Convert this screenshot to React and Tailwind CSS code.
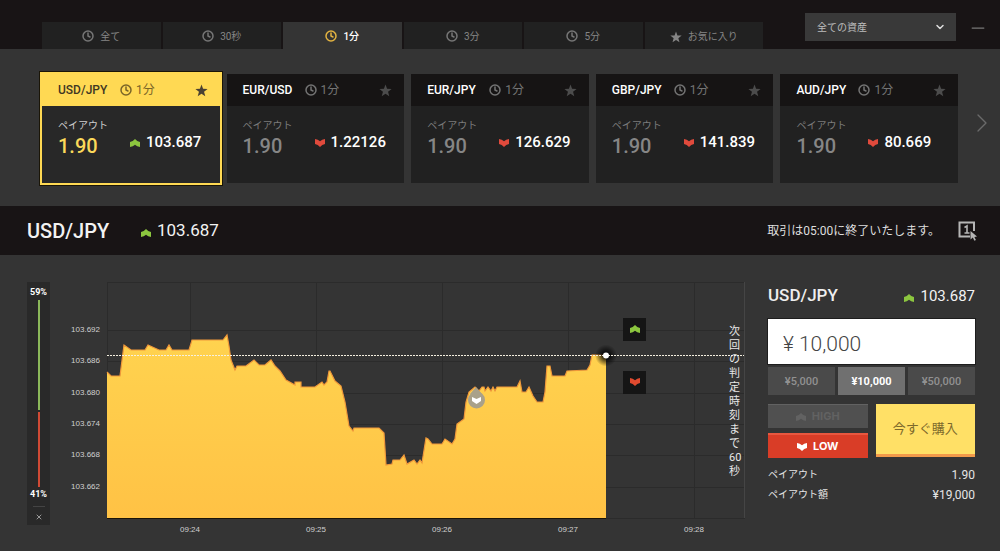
import React, { useState } from 'react';
import { Clock, ChevronDown, ChevronRight, Minus, X } from 'lucide-react';

const TABS = [
    { id: 'all', label: '全て', icon: 'clock' },
    { id: '30s', label: '30秒', icon: 'clock' },
    { id: '1m', label: '1分', icon: 'clock' },
    { id: '3m', label: '3分', icon: 'clock' },
    { id: '5m', label: '5分', icon: 'clock' },
    { id: 'fav', label: 'お気に入り', icon: 'star' },
];

const ASSETS = [
    { pair: 'USD/JPY', price: '103.687', up: true },
    { pair: 'EUR/USD', price: '1.22126', up: false },
    { pair: 'EUR/JPY', price: '126.629', up: false },
    { pair: 'GBP/JPY', price: '141.839', up: false },
    { pair: 'AUD/JPY', price: '80.669', up: false },
];

const AMOUNTS = ['5,000', '10,000', '50,000'];

// Chart geometry, in viewBox units
const PRICE_LINES = [
    { y: 48, label: '103.692' },
    { y: 79, label: '103.686' },
    { y: 111, label: '103.680' },
    { y: 142, label: '103.674' },
    { y: 173, label: '103.668' },
    { y: 205, label: '103.662' },
];

const TIME_LINES = [
    { x: 122, label: '09:24' },
    { x: 248, label: '09:25' },
    { x: 374, label: '09:26' },
    { x: 500, label: '09:27' },
    { x: 626, label: '09:28' },
];

const SERIES =
    '39,90 43,94 52,94 56,63 63,68 77,68 80,63 91,68 98,68 101,63 104,68 121,68 124,58 155,58 159,53 161,64 163,78 167,88 169,84 178,84 186,78 191,83 197,83 203,78 207,84 212,89 218,98 227,103 227,100 233,100 233,105 247,105 254,100 256,103 259,100 261,89 262,89 267,99 273,104 277,120 281,144 285,149 286,146 311,146 316,151 318,183 324,182 325,178 332,178 336,173 339,182 346,178 349,182 352,178 354,181 358,156 360,157 364,162 374,162 377,157 384,162 387,157 389,142 396,137 398,120 401,110 407,105 411,109 414,105 416,105 417,109 420,105 423,109 425,105 427,109 429,105 449,105 452,99 454,110 458,110 461,105 465,114 469,120 475,120 477,110 479,84 482,84 484,94 497,94 499,89 519,88 522,83 524,73 538,73';

const Star = ({ className }) => (
    <svg viewBox="0 0 24 24" fill="currentColor" className={className} aria-hidden="true">
        <path d="M12 1l2.9 7.9 8.4.3-6.6 5.2 2.3 8.1-7-4.7-7 4.7 2.3-8.1L.7 9.2l8.4-.3z" />
    </svg>
);

const Arrow = ({ up, className }) => (
    <svg viewBox="0 0 10 8" fill="currentColor" className={className} aria-hidden="true">
        {up ? (
            <path d="M0 3Q3 2.400 5 0 7 2.400 10 3V8Q7 7.600 5 5.800 3 7.600 0 8z" />
        ) : (
            <path d="M0 0Q3 .4 5 2.200 7 .4 10 0V5Q7 5.600 5 8 3 5.600 0 5z" />
        )}
    </svg>
);

const Tab = ({ tab, active, onClick }) => (
    <button
        onClick={onClick}
        className={`flex h-[27px] flex-1 items-center justify-center gap-1.5 pt-0.5 text-[10px] ${
            active ? 'bg-[#343434] font-medium text-white' : 'bg-[#212121] text-[#858585]'
        }`}
    >
        {tab.icon === 'star' ? (
            <Star className="h-3 w-3" />
        ) : (
            <Clock strokeWidth={3} className={`mb-0.5 h-3 w-3 ${active ? 'text-[#e3b341]' : 'text-[#767676]'}`} />
        )}
        {tab.label}
    </button>
);

const AssetCard = ({ asset, active }) => (
    <article
        className={`h-[109px] min-w-0 ${
            active ? 'bg-[#282828] shadow-[0_0_0_2px_#ffd953,0_0_0_3px_#1a1507]' : 'bg-[#212121]'
        }`}
    >
        <header
            className={`flex h-8 items-center pr-3 pl-4 ${
                active ? 'bg-[#ffd953] text-[#3f3723]' : 'bg-[#161414] text-white'
            }`}
        >
            <h2 className="w-[62px] text-xs font-medium">{asset.pair}</h2>
            <span className={`flex items-center gap-1 text-xs ${active ? 'text-[#7a6528]' : 'text-[#747474]'}`}>
                <Clock strokeWidth={3} className="h-3 w-3" />
                1分
            </span>
            <button
                aria-label="お気に入り"
                className={`ml-auto ${active ? 'text-[#4a4132]' : 'text-[#4c4c4c]'}`}
            >
                <Star className="h-[13px] w-[13px]" />
            </button>
        </header>
        <div className="flex pt-3 pl-4">
            <div className="w-[72px]">
                <p className={`text-[10px] leading-4 ${active ? 'text-[#cfcfcf]' : 'text-[#7c7c7c]'}`}>ペイアウト</p>
                <p className={`text-xl leading-6 font-medium ${active ? 'text-[#fbd95a]' : 'text-[#868686]'}`}>1.90</p>
            </div>
            <p className="mt-3.5 flex h-5 items-center gap-1.5 text-[15px] font-medium text-white">
                <Arrow
                    up={asset.up}
                    className={`mt-0.5 h-2 w-2.5 ${asset.up ? 'text-[#8cc63f]' : 'text-[#e04a3c]'}`}
                />
                {asset.price}
            </p>
        </div>
    </article>
);

const Sentiment = () => (
    <div className="flex h-[243px] w-[23px] flex-col items-center bg-[#292929] pt-1 text-[9px] font-bold text-white">
        <span className="leading-3">59%</span>
        <span className="mt-0.5 h-[110px] w-0.5 bg-[#8bb85a]" />
        <span className="mt-0.5 h-[75px] w-0.5 bg-[#d04a35]" />
        <span className="mt-px leading-3">41%</span>
        <span className="mt-1.5 h-px w-3 bg-[#444]" />
        <button aria-label="閉じる" className="mt-1.5 text-[#999]">
            <X className="h-2 w-2" strokeWidth={3} />
        </button>
    </div>
);

const Chart = () => (
    <div className="relative min-w-0 flex-1">
        <svg viewBox="0 0 677 254" className="block w-full">
            <defs>
                <linearGradient id="area" x1="0" y1="0" x2="0" y2="1">
                    <stop offset="0" stopColor="#ffd34f" />
                    <stop offset="1" stopColor="#ffc245" />
                </linearGradient>
                <radialGradient id="halo">
                    <stop offset="0.2" stopColor="#000" stopOpacity="0.9" />
                    <stop offset="1" stopColor="#000" stopOpacity="0" />
                </radialGradient>
            </defs>

            {/* Grid */}
            <g stroke="#2b2b2b" shapeRendering="crispEdges">
                <path d="M39.5 .5H676.5V236.5H39.5z" fill="none" />
                {PRICE_LINES.map(({ y }) => (
                    <line key={y} x1="39" x2="676" y1={y + 0.5} y2={y + 0.5} />
                ))}
                {TIME_LINES.map(({ x }) => (
                    <line key={x} x1={x + 0.5} x2={x + 0.5} y1="0" y2="236" />
                ))}
            </g>
            <path d="M676.5 0V236" stroke="#454545" />

            {/* Price area */}
            <polygon points={`${SERIES} 538,236 39,236`} fill="url(#area)" />
            <polyline points={SERIES} fill="none" stroke="#f0983a" strokeWidth="1.2" />
            <path d="M39 236.5H538" stroke="#1a1408" />

            {/* Current price */}
            <circle cx="538" cy="73.5" r="11" fill="url(#halo)" />
            <path d="M39 73.5H676" stroke="#f5f0e0" strokeDasharray="2 1" />
            <circle cx="538" cy="73.5" r="3" fill="#fff" />

            {/* Open position */}
            <path d="M402 112l6-7 6 7z" fill="#a9a18a" />
            <circle cx="408.500" cy="118" r="8.500" fill="#a9a18a" />
            <path d="M404 115l4.500 2 4.500-2v4l-4.500 3-4.500-3z" fill="#fff" />

            <g fill="#d0d0d0" fontSize="8" fontFamily="Liberation Sans, sans-serif">
                {PRICE_LINES.map(({ y, label }) => (
                    <text key={label} x="32" y={y + 2} textAnchor="end">{label}</text>
                ))}
                {TIME_LINES.map(({ x, label }) => (
                    <text key={label} x={x} y="250" textAnchor="middle">{label}</text>
                ))}
            </g>
        </svg>

        <button
            aria-label="HIGH"
            className="absolute top-[14%] left-[82%] flex h-[23px] w-[23px] items-center justify-center bg-[#151515] text-[#8cc63f]"
        >
            <Arrow up className="h-2 w-2.5" />
        </button>
        <button
            aria-label="LOW"
            className="absolute top-[35%] left-[82%] flex h-[23px] w-[23px] items-center justify-center bg-[#151515] text-[#e04a2f]"
        >
            <Arrow className="h-2 w-2.5" />
        </button>
        <p className="absolute top-[17%] right-0.5 w-3.5 text-[11px] leading-[14px] break-all text-[#e8e8e8]">
            次回の判定時刻まで60秒
        </p>
    </div>
);

const OrderPanel = () => {
    const [amount, setAmount] = useState('10,000');

    return (
        <section className="w-[207px] shrink-0">
            <div className="flex h-7 items-center">
                <h2 className="text-[17px] font-medium text-[#eee]">USD/JPY</h2>
                <Arrow up className="mt-1 mr-1.5 ml-auto h-2 w-2.5 text-[#8cc63f]" />
                <span className="text-[15px] text-[#f2f2f2]">103.687</span>
            </div>
            <input
                aria-label="金額"
                value={`¥ ${amount}`}
                onChange={(e) => setAmount(e.target.value.replace(/[^\d,]/g, ''))}
                className="mt-[9px] block h-[45px] w-full bg-white px-[15px] pt-1 text-[21px] font-light text-[#444] outline-1 outline-[#1d1d1d]"
            />
            <div className="mt-[3px] grid grid-cols-3 gap-[3px]">
                {AMOUNTS.map((value) => (
                    <button
                        key={value}
                        onClick={() => setAmount(value)}
                        className={`h-7 pt-0.5 text-[11px] ${
                            value === amount ? 'bg-[#707070] font-bold text-white' : 'bg-[#4a4a4a] font-medium text-[#919191]'
                        }`}
                    >
                        ¥{value}
                    </button>
                ))}
            </div>
            <div className="mt-[9px] flex gap-2">
                <div className="flex flex-1 flex-col gap-[5px]">
                    <button className="flex h-6 items-center justify-center gap-1.5 border-t border-[#626262] bg-[#505050] font-[Inter] text-[11px] font-bold text-[#626262]">
                        <Arrow up className="h-2 w-2.5" />
                        HIGH
                    </button>
                    <button className="flex h-[25px] items-center justify-center gap-1.5 border-t-2 border-[#e8573f] bg-[#d93d27] font-[Inter] text-[11px] font-bold text-white">
                        <Arrow className="h-2 w-2.5" />
                        LOW
                    </button>
                </div>
                <button className="h-[53px] flex-1 border-b-3 border-[#f29a4a] bg-[#ffe066] text-[13px] text-[#7d6a2c]">
                    今すぐ購入
                </button>
            </div>
            <dl className="mt-[7px] text-xs leading-5 text-[#e4e4e4]">
                <div className="flex items-center justify-between">
                    <dt className="text-[10px]">ペイアウト</dt>
                    <dd>1.90</dd>
                </div>
                <div className="flex items-center justify-between">
                    <dt className="text-[10px]">ペイアウト額</dt>
                    <dd>¥19,000</dd>
                </div>
            </dl>
        </section>
    );
};

const App = () => {
    const [tab, setTab] = useState('1m');

    return (
        <div className="min-h-screen bg-[#343434] font-[Roboto,'Noto_Sans_CJK_JP',sans-serif]">
            {/* Top bar */}
            <div className="flex h-[49px] items-start bg-[#181415] pr-3 pl-[42px]">
                <nav className="mt-[22px] flex flex-1 gap-0.5">
                    {TABS.map((t) => (
                        <Tab key={t.id} tab={t} active={t.id === tab} onClick={() => setTab(t.id)} />
                    ))}
                </nav>
                <div className="relative mt-[13px] ml-[42px] w-[151px]">
                    <select
                        aria-label="資産"
                        className="h-7 w-full appearance-none bg-[#393939] px-3 text-[10px] text-[#bdbdbd]"
                    >
                        <option>全ての資産</option>
                    </select>
                    <ChevronDown className="pointer-events-none absolute top-2 right-2.5 h-3 w-3 text-[#ddd]" strokeWidth={3} />
                </div>
                <button aria-label="最小化" className="mt-[18px] ml-3 text-[#777]">
                    <Minus className="h-5 w-5" strokeWidth={1.5} />
                </button>
            </div>

            {/* Assets */}
            <section className="flex pt-[25px] pb-[23px] pl-[42px]">
                <div className="grid flex-1 grid-cols-5 gap-[7px]">
                    {ASSETS.map((asset, i) => (
                        <AssetCard key={asset.pair} asset={asset} active={i === 0} />
                    ))}
                </div>
                <button aria-label="次へ" className="flex w-[42px] items-center justify-center pb-3 pl-1.5 text-[#6a6a6a]">
                    <ChevronRight className="h-8 w-8" strokeWidth={1} />
                </button>
            </section>

            {/* Selected asset */}
            <section className="flex h-[49px] items-center bg-[#181415] pr-[22px] pl-[27px] text-[#f2f2f2]">
                <h1 className="w-[114px] text-xl leading-6 font-medium">USD/JPY</h1>
                <Arrow up className="mt-1 mr-1.5 h-2 w-2.5 text-[#8cc63f]" />
                <span className="text-[17px]">103.687</span>
                <p className="ml-auto text-xs text-[#dedede]">取引は05:00に終了いたします。</p>
                <button aria-label="ワンクリック注文" className="ml-[18px] text-[#b5b5b5]">
                    <svg viewBox="0 0 20 20" className="h-5 w-5">
                        <path d="M12 15.500H1.500V1.500H16V10" fill="none" stroke="currentColor" strokeWidth="2" />
                        <path d="M6.500 6.500L9 5V12M6.500 12H11.500" fill="none" stroke="currentColor" strokeWidth="1.6" />
                        <path d="M12.500 10l6.500 5.500-2.600.4 1.500 3.100-1.500.8-1.600-3.200-2.300 1.900z" fill="currentColor" />
                    </svg>
                </button>
            </section>

            {/* Chart and order */}
            <main className="flex items-start pt-[27px] pr-[25px] pb-3 pl-[27px]">
                <Sentiment />
                <div className="flex min-w-0 flex-1 pr-[23px] pl-[18px]">
                    <Chart />
                </div>
                <OrderPanel />
            </main>
        </div>
    );
};

export default App;
